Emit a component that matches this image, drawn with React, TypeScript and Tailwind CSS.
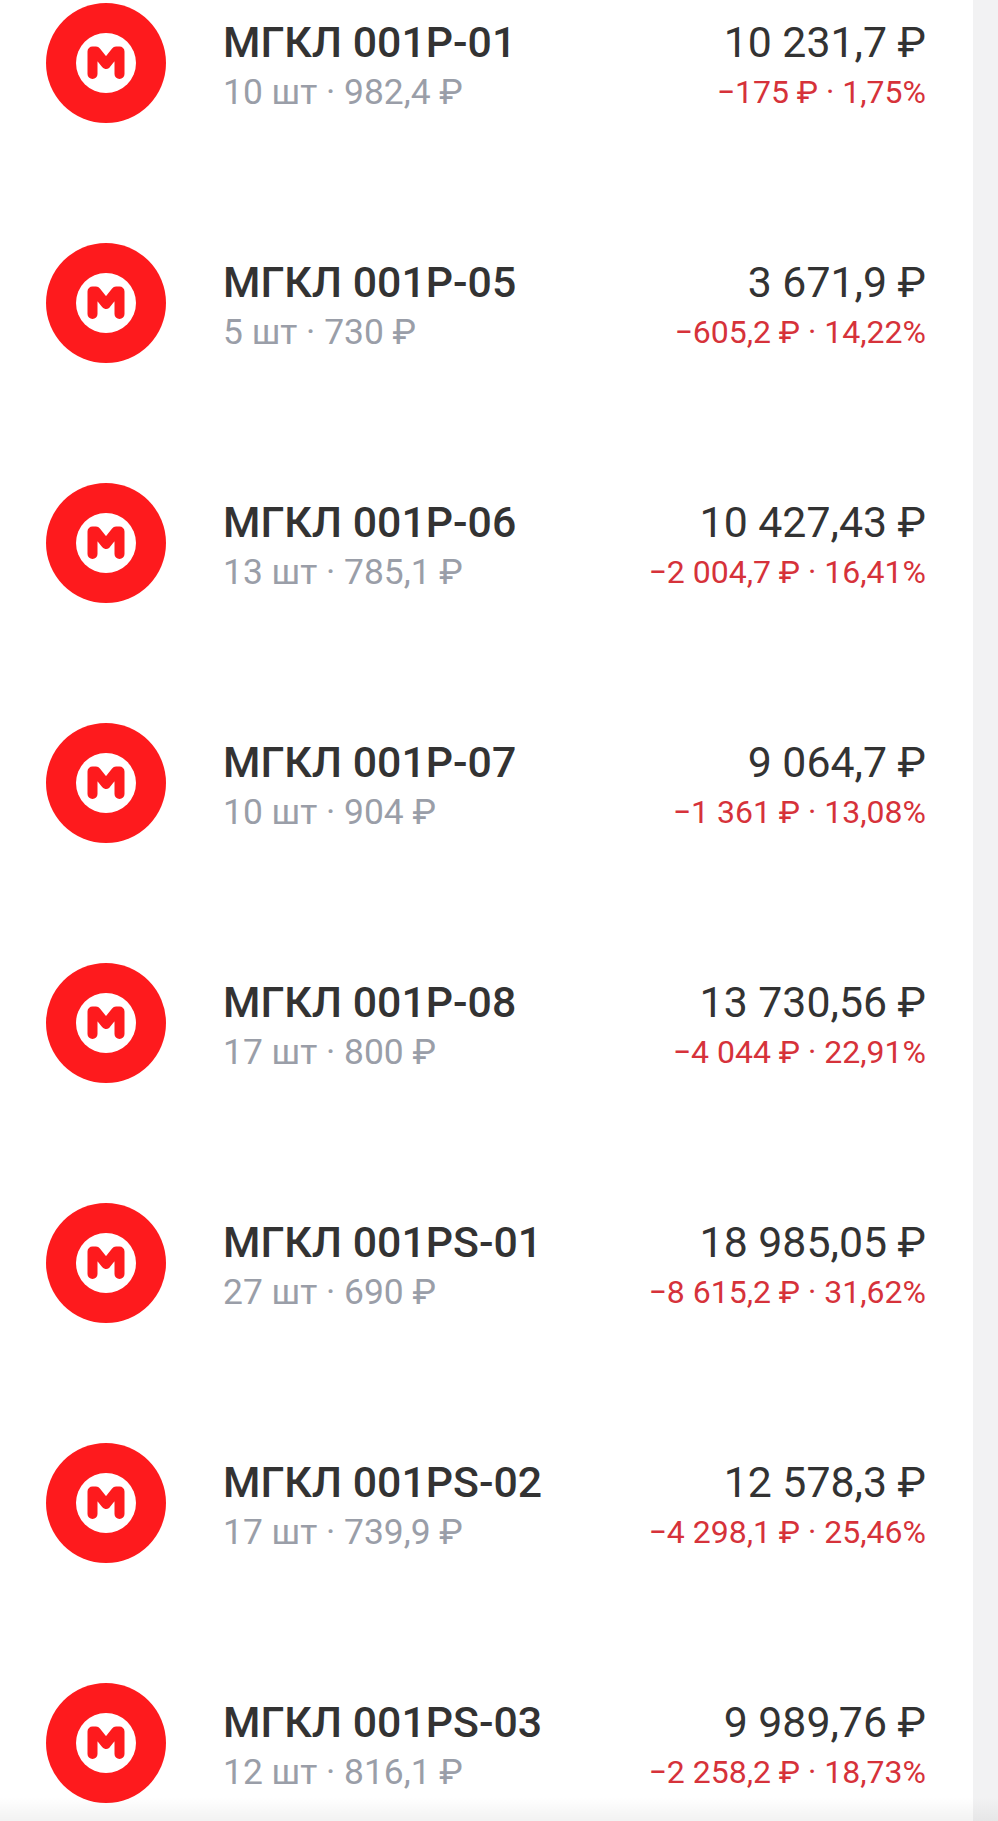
const holdings = [
  { name: 'МГКЛ 001Р-01', details: '10 шт · 982,4 ₽', value: '10 231,7 ₽', change: '−175 ₽ · 1,75%' },
  { name: 'МГКЛ 001Р-05', details: '5 шт · 730 ₽', value: '3 671,9 ₽', change: '−605,2 ₽ · 14,22%' },
  { name: 'МГКЛ 001Р-06', details: '13 шт · 785,1 ₽', value: '10 427,43 ₽', change: '−2 004,7 ₽ · 16,41%' },
  { name: 'МГКЛ 001Р-07', details: '10 шт · 904 ₽', value: '9 064,7 ₽', change: '−1 361 ₽ · 13,08%' },
  { name: 'МГКЛ 001Р-08', details: '17 шт · 800 ₽', value: '13 730,56 ₽', change: '−4 044 ₽ · 22,91%' },
  { name: 'МГКЛ 001PS-01', details: '27 шт · 690 ₽', value: '18 985,05 ₽', change: '−8 615,2 ₽ · 31,62%' },
  { name: 'МГКЛ 001PS-02', details: '17 шт · 739,9 ₽', value: '12 578,3 ₽', change: '−4 298,1 ₽ · 25,46%' },
  { name: 'МГКЛ 001PS-03', details: '12 шт · 816,1 ₽', value: '9 989,76 ₽', change: '−2 258,2 ₽ · 18,73%' },
];

const Logo = () => (
  <svg viewBox="0 0 120 120" className="w-[120px] h-[120px] shrink-0">
    <circle cx="60" cy="60" r="60" fill="#fe1a1d" />
    <circle cx="60" cy="60" r="30" fill="#fff" />
    <path
      d="M46.5 71V48.5H50L60 61L70 48.5H73.5V71"
      fill="none"
      stroke="#fe1a1d"
      strokeWidth="10"
      strokeLinecap="round"
      strokeLinejoin="round"
    />
  </svg>
);

export default function App() {
  return (
    <div className="relative h-[1821px] overflow-hidden flex bg-[#f2f2f3] font-['Roboto',sans-serif]">
      <div className="w-[973px] h-full bg-white pt-[3px] pl-[46px] pr-[47px] flex flex-col gap-[120px]">
        {holdings.map((item) => (
          <div key={item.name} className="flex items-center h-[120px] shrink-0">
            <Logo />
            <div className="ml-[57px] flex-1 pt-[7px]">
              <div className="text-[42.8px] leading-[50px] font-medium text-[#333333]">{item.name}</div>
              <div className="mt-[1px] text-[35.4px] leading-[48px] text-[#9a9ea8]">{item.details}</div>
            </div>
            <div className="text-right pt-[7px]">
              <div className="text-[42.8px] leading-[50px] text-[#333333]">{item.value}</div>
              <div className="mt-[1px] text-[32px] leading-[48px] text-[#d6323a]">{item.change}</div>
            </div>
          </div>
        ))}
      </div>
      <div className="absolute left-0 right-0 bottom-0 h-[24px] bg-gradient-to-b from-transparent to-black/5 pointer-events-none" />
    </div>
  );
}
